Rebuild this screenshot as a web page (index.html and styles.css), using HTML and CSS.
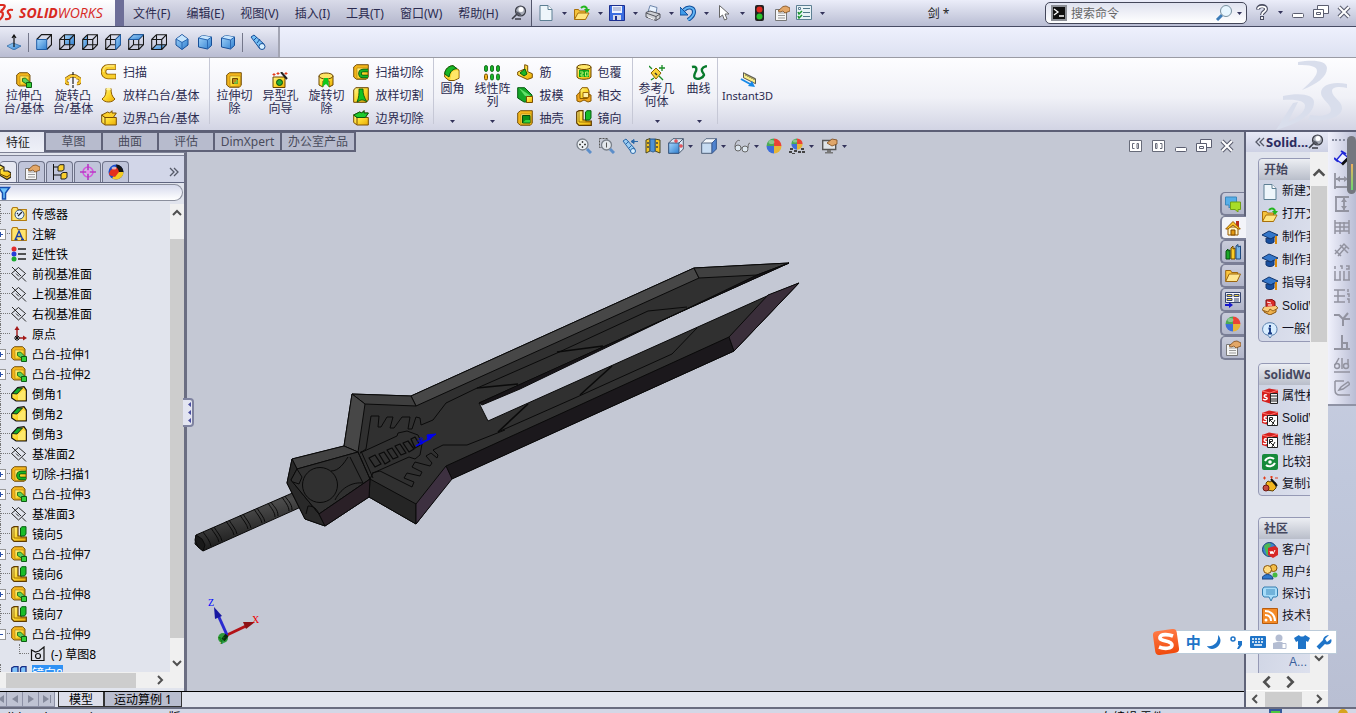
FILE: index.html
```
<!DOCTYPE html>
<html lang="zh-CN">
<head>
<meta charset="utf-8">
<title>SolidWorks - 剑</title>
<link rel="stylesheet" href="styles.css">
</head>
<body>
<svg class="defs" aria-hidden="true">
<defs>
<linearGradient id="gy" x1="0" y1="0" x2="1" y2="1"><stop offset="0" stop-color="#fff58e"/><stop offset=".5" stop-color="#fdd92c"/><stop offset="1" stop-color="#e8a908"/></linearGradient>
<linearGradient id="gb" x1="0" y1="0" x2="1" y2="1"><stop offset="0" stop-color="#a6d6fb"/><stop offset="1" stop-color="#2f7fd0"/></linearGradient>
<linearGradient id="grip" x1="0" y1="0" x2="0.35" y2="1"><stop offset="0" stop-color="#1c1c1c"/><stop offset=".4" stop-color="#4b4b4b"/><stop offset="1" stop-color="#151515"/></linearGradient>
<linearGradient id="so" x1="0" y1="0" x2="0" y2="1"><stop offset="0" stop-color="#ff7a45"/><stop offset="1" stop-color="#f04a0c"/></linearGradient>
<symbol id="caret" viewBox="0 0 7 4"><path d="M0 0h7L3.500 4z" fill="#33335a"/></symbol>
<symbol id="new" viewBox="0 0 16 16"><path d="M2 .5h8l4 4v11H2z" fill="#eef6fb" stroke="#5d7f93"/><path d="M10 .5v4h4" fill="#fff" stroke="#5d7f93"/></symbol>
<symbol id="open" viewBox="0 0 16 16"><path d="M.5 14V4.500h4l1 1.500h6v8z" fill="#f5c33c" stroke="#a9700a"/><path d="M.5 14.500 4 8h11l-3.500 6.500z" fill="#ffe680" stroke="#a9700a"/><path d="M7 3c3-3 6-1 6 2" fill="none" stroke="#23b61e" stroke-width="2"/><path d="M10 4h6l-3 4z" fill="#23b61e"/></symbol>
<symbol id="save" viewBox="0 0 16 16"><path d="M.5.5h15v15h-15z" fill="#3b6de0" stroke="#1c2f8f"/><path d="M3 1h10v7H3z" fill="#eef3ff"/><path d="M4 3h8M4 5h8" stroke="#8a96c0"/><path d="M4 10h8v5H4z" fill="#d5daea"/><path d="M6 11h2v4H6z" fill="#1c2f8f"/></symbol>
<symbol id="print" viewBox="0 0 16 16"><path d="M3 7 5 .5l7 2L11 8z" fill="#e9f3ff" stroke="#6d86ab"/><path d="M1 7.500 5 6l10 3v4l-4 2.500L1 12z" fill="#cfd1d6" stroke="#54565e"/><path d="m1 8 10 3.500L15 9M11 11.500v4" fill="none" stroke="#54565e"/><path d="m3 12 6 2.500" stroke="#fff"/></symbol>
<symbol id="undo" viewBox="0 0 16 16"><path d="M4 5c4-4 10-3 10 2 0 4-3 6-6 8" fill="none" stroke="#114f9c" stroke-width="4"/><path d="M0 2v8h8z" fill="#3f9bea" stroke="#114f9c"/><path d="M4 5c4-4 10-3 10 2 0 4-3 6-6 8" fill="none" stroke="#63b5f5" stroke-width="2"/></symbol>
<symbol id="cursor" viewBox="0 0 16 16"><path d="M3.500.5v12l3-2.500 2 5 2.500-1-2-5h4z" fill="#fff" stroke="#666"/></symbol>
<symbol id="traffic" viewBox="0 0 16 16"><rect x="4" y="0" width="9" height="16" rx="2" fill="#222"/><circle cx="8.500" cy="4.500" r="3" fill="#e02a20"/><circle cx="8.500" cy="11.500" r="3" fill="#27c32a"/></symbol>
<symbol id="props" viewBox="0 0 16 16"><path d="M1.500 4.500h11v11h-11z" fill="#f6f6f6" stroke="#777"/><path d="M4 8h7M4 10.500h7M4 13h7" stroke="#999"/><path d="m4 6 5-4.500 3-.5 4 2v3l-5 2-2-2-3 1z" fill="#e3a768" stroke="#7c4b1c" stroke-width=".8"/></symbol>
<symbol id="optlist" viewBox="0 0 16 16"><path d="M.5.5h15v14H.5z" fill="#e8f2f6" stroke="#5d7f93"/><path d="M7 3.500h7M7 7.500h7M7 11.500h7" stroke="#4f7788"/><path d="M2.500 2.500h2v2h-2z" fill="#fff" stroke="#5d7f93"/><path d="m2 7 1 2 3-3M2 11l1 2 3-3" fill="none" stroke="#1b9430" stroke-width="1.500"/></symbol>
<symbol id="pin" viewBox="0 0 16 16"><path d="m6 9-5 5M4 14h6" stroke="#3b3d46" stroke-width="1.600"/><circle cx="9.500" cy="6" r="5" fill="#a9adb8" stroke="#3b3d46" stroke-width="1.200"/><path d="M5 6c0 3 3 5 6 4.500L9 8z" fill="#555864"/><circle cx="10" cy="4.500" r="2.500" fill="#fff"/></symbol>
<symbol id="help" viewBox="0 0 16 16"><path d="M4 5.500C4 1 12 1 12 5c0 3-4 2.500-4 6" fill="none" stroke="#4a4d60" stroke-width="4"/><path d="M6 12h4v4H6z" fill="#4a4d60"/><path d="M4 5c0-3 8-3.500 8 0 0 3-4 2.500-4 6M8 13v2" fill="none" stroke="#fff" stroke-width="1.800"/></symbol>
<symbol id="min" viewBox="0 0 16 16"><rect x="2.500" y="9.500" width="11" height="4" rx="1" fill="#fff" stroke="#5b5e70"/></symbol>
<symbol id="restore" viewBox="0 0 16 16"><path d="M4.500 1.500h11v8h-11z" fill="#fff" stroke="#5b5e70"/><path d="M.5 5.500h10v8H.5z" fill="#fff" stroke="#5b5e70"/><path d="M3.500 8.500h4v2h-4z" fill="none" stroke="#5b5e70"/></symbol>
<symbol id="x" viewBox="0 0 16 16"><path d="m3 3 10 10M13 3 3 13" stroke="#5b5e70" stroke-width="4.200"/><path d="m3 3 10 10M13 3 3 13" stroke="#fff" stroke-width="2"/></symbol>
<symbol id="cmd" viewBox="0 0 16 16"><path d="M0 0h16v16H0z" fill="#8d9097"/><path d="M2 2h12v12H2z" fill="#111"/><path d="m3 4 4 3-4 3M8 11h5" stroke="#fff" stroke-width="1.300" fill="none"/></symbol>
<symbol id="mag" viewBox="0 0 18 18"><path d="m2 16 5-5" stroke="#3c7cb8" stroke-width="3"/><circle cx="11" cy="7" r="5.500" fill="#e7f6ff" stroke="#78909f"/></symbol>
<symbol id="normal" viewBox="0 0 16 16"><path d="m1 12 6-3 8 3-7 4z" fill="url(#gb)" stroke="#22619f" stroke-width=".7"/><path d="M8 13V2M6 4l2-3 2 3" stroke="#111" stroke-width="1.200" fill="none"/></symbol>
<symbol id="wire" viewBox="0 0 16 16"><path d="M.7 5.500h10v10H.7zM5.500.7h10v10h-10zM.7 5.500 5.500.7M10.700 5.500l4.800-4.800M10.700 15.500l4.800-4.800M.7 15.500l4.800-4.800" fill="none" stroke="#171717" stroke-width="1.100"/></symbol>
<symbol id="front" viewBox="0 0 16 16"><path d="M.7 5.500 5.500.7h10v10l-4.800 4.800M10.700 5.500l4.800-4.800" fill="none" stroke="#171717" stroke-width="1.200"/><path d="M.7 5.500h10v10H.7z" fill="url(#gb)" stroke="#1d5ca5"/></symbol>
<symbol id="back" viewBox="0 0 16 16"><path d="M5.500.7h10v10h-10z" fill="url(#gb)"/><use href="#wire"/></symbol>
<symbol id="left" viewBox="0 0 16 16"><path d="M.7 5.500 5.500.7v10l-4.800 4.800z" fill="url(#gb)"/><use href="#wire"/></symbol>
<symbol id="right" viewBox="0 0 16 16"><use href="#wire"/><path d="m10.700 5.500 4.800-4.800v10l-4.800 4.800z" fill="url(#gb)" stroke="#1d5ca5"/></symbol>
<symbol id="top" viewBox="0 0 16 16"><use href="#wire"/><path d="M.7 5.500 5.500.7h10l-4.800 4.800z" fill="url(#gb)" stroke="#1d5ca5"/></symbol>
<symbol id="bottom" viewBox="0 0 16 16"><path d="m.7 15.500 4.800-4.800h10l-4.800 4.800z" fill="url(#gb)"/><use href="#wire"/></symbol>
<symbol id="iso" viewBox="0 0 16 16"><path d="m8 .5 6 4.500v6l-6 4.500L2 11V5z" fill="url(#gb)" stroke="#174f98"/><path d="m8 1 5.500 4L8 8 2.500 5z" fill="#c7e5fd"/><path d="m2 5 6 3.500L14 5M8 8.500v7" fill="none" stroke="#2c68b3"/></symbol>
<symbol id="dim" viewBox="0 0 16 16"><path d="m1.500 4 4-2.500 9 1.500v8.500l-4 3.500-9-2z" fill="url(#gb)" stroke="#174f98"/><path d="m2 4 8.500 1.500 4-2.500-9-1.500z" fill="#c7e5fd"/><path d="m1.500 4 9 2 4-3M10.500 6v9" fill="none" stroke="#2c68b3"/></symbol>
<symbol id="spy" viewBox="0 0 16 16"><path d="m1 3 3-2 10 9-4 5z" fill="#74bff5" stroke="#174f98"/><circle cx="12" cy="12.500" r="3" fill="#d5efff" stroke="#174f98"/><path d="m4 6 3-3M7 9l3-4" stroke="#174f98"/></symbol>
<symbol id="extr" viewBox="0 0 16 16"><path d="M.7 3 3.500.7h8L14 3v9l-2 2H3L.7 12z" fill="#f2b51a" stroke="#6a4500" stroke-width=".9"/><path d="M4 4h9v9H4z" fill="url(#gy)" stroke="#a87a10" stroke-width=".6"/><path d="m6.500 6.500 3-.5 4 4-3 2-4-2.500z" fill="#5ad35b" stroke="#0c5c12" stroke-width=".8"/><path d="M10.500 10.500h5v5h-5z" fill="#35cf38" stroke="#0c5c12"/></symbol>
<symbol id="revolve" viewBox="0 0 16 16"><path d="M5 6c-5-2-6 6-1 5.500M11 6c5-2 6 6 1 5.500M3 6c2-3 8-3 10 0" fill="none" stroke="#8a5a00" stroke-width="3.400"/><path d="M5 6c-5-2-6 6-1 5.500M11 6c5-2 6 6 1 5.500M3 6c2-3 8-3 10 0" fill="none" stroke="#f9cb34" stroke-width="2"/><path d="M8 0v3M8 5v7M8 13v3" stroke="#222" stroke-width="1.200"/></symbol>
<symbol id="sweep" viewBox="0 0 16 16"><path d="M15 3H7C1 3 1 12.500 7 12.500h8" fill="none" stroke="#8a5a00" stroke-width="5.500"/><path d="M14.500 3H7C1 3 1 12.500 7 12.500h7.500" fill="none" stroke="#f9cf2e" stroke-width="3.800"/><path d="M13 2H7C3 2 2 6 3 8" fill="none" stroke="#fff5a0"/></symbol>
<symbol id="loft" viewBox="0 0 16 16"><path d="M5 1.500h5c0 5 1 8 4 10.500-3 4-10 4-13 0 4-3 4-6 4-10.500z" fill="url(#gy)" stroke="#8b5a00"/><ellipse cx="7.500" cy="2" rx="2.500" ry="1.200" fill="#fff3a0"/></symbol>
<symbol id="boundary" viewBox="0 0 16 16"><path d="M.7 5 4 7.500h11.300v7.500H4L.7 12.500z" fill="url(#gy)" stroke="#7a4e00"/><path d="m.7 5 6-3 2 1 2.300-2.300V3h4.300l-3 4.500H4z" fill="#fbd02d" stroke="#7a4e00"/><path d="M4 7.500v7" stroke="#7a4e00"/></symbol>
<symbol id="bcut" viewBox="0 0 16 16"><use href="#boundary"/><path d="m.7 5 6-3 2 1 2.300-2.300V3h4.300l-3 4.500H4z" fill="#1fc92c" stroke="#075c10"/></symbol>
<symbol id="box" viewBox="0 0 16 16"><path d="m.7 3 2.800-2.300h11.800v12.300l-2 2.300H3.500L.7 13z" fill="#f2b51a" stroke="#6a4500" stroke-width=".9"/><path d="M4 4h10.500v10.500H4z" fill="url(#gy)" stroke="#a87a10" stroke-width=".6"/></symbol>
<symbol id="ecut" viewBox="0 0 16 16"><use href="#box"/><path d="M6.500 6.500h5v5h-5z" fill="#c08a1c" stroke="#6c4600"/><path d="M8 11h3V8" stroke="#6ed04e" stroke-width="1.500" fill="none"/></symbol>
<symbol id="hole" viewBox="0 0 16 16"><path d="M1 5h12v10.500H1z" fill="url(#gy)" stroke="#6c4600"/><circle cx="7.500" cy="10.500" r="3" fill="#25aa32" stroke="#064d0d"/><path d="m9 0 6 7" stroke="#222" stroke-width="2"/><path d="M2 1v3M.5 2.500h3M6 0v3M4.500 1.500h3M14 0v3M12.500 1.500h3" stroke="#e23b18"/></symbol>
<symbol id="rcut" viewBox="0 0 16 16"><path d="M1 4v9l4 2V9h6v6l4-2V4z" fill="url(#gy)" stroke="#6c4600"/><ellipse cx="8" cy="4" rx="7" ry="3" fill="#ffe465" stroke="#6c4600"/><path d="M6 6h4l1 9-3-3-4 3z" fill="#0fc81d"/></symbol>
<symbol id="scut" viewBox="0 0 16 16"><use href="#box"/><path d="M15 6.500h-5c-4 0-4 6 0 6h5" fill="none" stroke="#064d0d" stroke-width="3.600"/><path d="M15 6.500h-5c-4 0-4 6 0 6h5" fill="none" stroke="#18b424" stroke-width="2"/></symbol>
<symbol id="lcut" viewBox="0 0 16 16"><path d="m.7 3 2-2.300h12.600V13l-2 2.300H.7z" fill="url(#gy)" stroke="#6c4600"/><path d="M6 2h4c0 5 1 8 4 13-3-2-4-2-6-2l-4 2c2-5 2-8 2-13z" fill="#12c322" stroke="#064d0d" stroke-width=".8"/></symbol>
<symbol id="fillet" viewBox="0 0 16 16"><path d="M.7 9C1 4 5 .7 9 .7l6 4.500v8l-5 2.300H5L.7 12z" fill="url(#gy)" stroke="#7a5200"/><path d="M.7 9C1 4 5 .7 9 .7l4 3C9 4 6 6 5 12z" fill="#17b626" stroke="#075c10"/><path d="M8 7c4-2 6-2 6.500-1v7l-4.500 2H6z" fill="#ffe768"/></symbol>
<symbol id="chamfer" viewBox="0 0 16 16"><path d="m.7 8 6-6.500L13 .7 15.300 4v11H5L.7 12z" fill="url(#gy)" stroke="#111" stroke-width="1.200"/><path d="m1.500 7.500 5-5.500h5l-5.500 6z" fill="#16ac2b" stroke="#111" stroke-width=".8"/><path d="m7 9 5-5 2.500 1v9H7z" fill="#ffe96a"/></symbol>
<symbol id="pattern" viewBox="0 0 16 16"><g fill="#16b525" stroke="#075c10" stroke-width=".8"><rect x=".5" y=".5" width="3" height="6" rx="1.500"/><rect x="6.500" y=".5" width="3" height="6" rx="1.500"/><rect x="12.500" y=".5" width="3" height="6" rx="1.500"/><rect x="6.500" y="9" width="3" height="6" rx="1.500"/><rect x="12.500" y="9" width="3" height="6" rx="1.500"/></g><rect x=".5" y="9" width="3" height="6" rx="1.500" fill="#f4b21d" stroke="#7a5200"/></symbol>
<symbol id="rib" viewBox="0 0 16 16"><path d="m.7 8 7-3V.7l3 1v6l4.600 2v4l-5 1.800L.7 11z" fill="url(#gy)" stroke="#7a4e00"/><path d="m3 9 5-4 2 5-3 2z" fill="#1ab727" stroke="#075c10"/></symbol>
<symbol id="draft" viewBox="0 0 16 16"><path d="M.7.7h7L15 8v7H7L.7 11z" fill="#16a728" stroke="#075c10"/><path d="m2 1 12 8H8z" fill="#63e16a"/><path d="M9.500 9.500h6v6h-6z" fill="url(#gy)" stroke="#7a4e00"/></symbol>
<symbol id="shell" viewBox="0 0 16 16"><use href="#box"/><path d="M5.500 5.500h7.500v7.500H5.500z" fill="#0a8f1a" stroke="#064d0d"/><path d="m6 12.500 2.500-2.500h4.500v2.500z" fill="#33d340"/></symbol>
<symbol id="wrap" viewBox="0 0 16 16"><path d="M1 3v10c1 3 13 3 14 0V3z" fill="url(#gy)" stroke="#6c4600"/><ellipse cx="8" cy="3" rx="7" ry="2.500" fill="#ffe768" stroke="#6c4600"/><path d="M3 6h10v7H3z" fill="#0ca51a"/><path d="M4 8h3v2H5v2h3M9.500 12V8H12v4z" stroke="#b9f26b" fill="none"/></symbol>
<symbol id="intersect" viewBox="0 0 16 16"><path d="M.7 8 4 5l11 3v6l-3 1-4-2-4 2-3-1z" fill="#f0a51e" stroke="#8a5a00"/><path d="M4 3.500 6 .7h5.500L13 4v6l-2 1.500H4z" fill="url(#gy)" stroke="#8a5a00"/><path d="M7 5.500h5.500v5H7z" fill="#fff0a8" stroke="#a06c08"/></symbol>
<symbol id="mirror" viewBox="0 0 16 16"><path d="M.7 2 3 .7h4V10h3v1h5.300v4.300H3L.7 13z" fill="url(#gy)" stroke="#5f3b00" stroke-width="1.200"/><path d="M9.500 2 11 .7h4V8l-1.500 2h-4z" fill="#18bd28" stroke="#075c10"/><path d="M3 1v11h12" stroke="#8a5a00" fill="none" stroke-width=".8"/></symbol>
<symbol id="refgeo" viewBox="0 0 16 16"><path d="m7 3 5 5-5 6-5-6z" fill="#fbd339" stroke="#8b6200"/><path d="M0 1l3 3M14 15l-4-4M13 0v6M10 3h6M2 15l3-2" stroke="#178b25" stroke-width="1.300"/><path d="m6 8 2 2" stroke="#333" stroke-width="1.500"/></symbol>
<symbol id="curve" viewBox="0 0 16 16"><path d="M1 2c4-1 5 1 4 4-1 2-3 5-1 7 3 2 8 0 9-3 0-2-3-3-2-6 1-2 2-2 5-3" fill="none" stroke="#087a2c" stroke-width="2.400"/></symbol>
<symbol id="instant" viewBox="0 0 16 16"><path d="m3.500.7 12 6v5l-12-6z" fill="#f8ed87" stroke="#333" stroke-width=".8"/><path d="M6 2v2m2-1v2m2-1v2m2-1v2m2-1v2" stroke="#333" stroke-width=".8"/><path d="m1 7 9 5" stroke="#1689e8" stroke-width="2"/><path d="m12 9 3 6-7-1z" fill="#1689e8"/></symbol>
<symbol id="zoomfit" viewBox="0 0 16 16"><circle cx="6.500" cy="6.500" r="5.500" fill="#edf1f4" stroke="#7a818b" stroke-width="1.300"/><path d="m11 11 4 4" stroke="#5c8ec9" stroke-width="3"/><path d="M6.500 3v2M6.500 8v2M3 6.500h2M8 6.500h2" stroke="#444" stroke-width="1.400"/></symbol>
<symbol id="zoomarea" viewBox="0 0 16 16"><path d="M.5.5h8v9h-8z" fill="none" stroke="#555" stroke-dasharray="2 1"/><circle cx="7.500" cy="7" r="5" fill="#e2e7ec" stroke="#7a818b" stroke-width="1.300"/><path d="m11 11 4 4" stroke="#5c8ec9" stroke-width="3"/><path d="M7.500 4.500v5" stroke="#555"/></symbol>
<symbol id="prev" viewBox="0 0 16 16"><path d="m1 3 3-2 9 10-3 4z" fill="#9acdf4" stroke="#2b68a8"/><circle cx="11" cy="13" r="2.500" fill="#d7efff" stroke="#2b68a8"/><path d="M10 3.500h6M12 1.500 9 3.500l3 2z" fill="#2b68a8" stroke="#2b68a8"/><path d="m4 6 3-3M7 10l3-3" stroke="#2b68a8"/></symbol>
<symbol id="section" viewBox="0 0 16 16"><path d="m1 2 4-1.500V13L1 15zM10 1l5 1v13l-5-2z" fill="#f6c421" stroke="#474724"/><path d="M5 1h5v12c-2 2-4 0-5 0z" fill="#4e91d5" stroke="#29598c"/><path d="M3 4v2m0 2v2m9-6v2m0 2v2" stroke="#444" stroke-width="1.500"/></symbol>
<symbol id="orient" viewBox="0 0 16 16"><path d="M.7 5 5 .7h10.300V11L11 15.300H.7z" fill="#dce9f6" stroke="#4b5a70"/><path d="M.7 5H11v10.300H.7z" fill="url(#gb)" stroke="#3b5982"/><path d="m11 5 4.300-4.300" stroke="#4b5a70"/><path d="M8 1v4M6 3h4m3 3v4m-2-2h4" stroke="#e3262c"/></symbol>
<symbol id="style" viewBox="0 0 16 16"><path d="M.7 5 5 .7h10.300V11L11 15.300H.7z" fill="#f3f7fb" stroke="#5b6b83"/><path d="M.7 5H11v10.300H.7z" fill="#c7dcf2" stroke="#5b6b83"/><path d="m11 5 4.300-4.300V11L11 15.300z" fill="#4f83cf" stroke="#3d5f98"/></symbol>
<symbol id="glasses" viewBox="0 0 16 16"><circle cx="4" cy="10" r="3" fill="#dce6ee" stroke="#666"/><circle cx="11" cy="11" r="3" fill="#dce6ee" stroke="#666"/><path d="M1 9c0-5 3-8 5-6M14 10c0-5 2-6 2-4M7 10h1" fill="none" stroke="#666"/></symbol>
<symbol id="ball" viewBox="0 0 16 16"><path d="M8 8V.5A7.500 7.500 0 0 0 .5 8z" fill="#4aaa55"/><path d="M8 8h7.500A7.500 7.500 0 0 0 8 .5z" fill="#ea4335"/><path d="M8 8v7.500A7.500 7.500 0 0 0 15.500 8z" fill="#e7b536"/><path d="M8 8H.5A7.500 7.500 0 0 0 8 15.500z" fill="#3d6fd9"/><ellipse cx="5.500" cy="4" rx="3" ry="2" fill="#fff" opacity=".35"/></symbol>
<symbol id="appear" viewBox="0 0 16 16"><circle cx="8" cy="8" r="7.500" fill="#1749c9"/><path d="M8 .5A7.500 7.500 0 0 1 15.500 8L10 9z" fill="#151515"/><path d="M15.500 8A7.500 7.500 0 0 1 4 14.300L9 8z" fill="#f4cb22"/><path d="M4 5c3-3 6-2 7 3l-4 5-6-2c0-3 1-4 3-6z" fill="#e4301d"/><ellipse cx="6" cy="4" rx="2.500" ry="1.500" fill="#fff" opacity=".6"/></symbol>
<symbol id="scene" viewBox="0 0 16 16"><path d="M1 10h3v2H1zM12 10h3v2h-3zM0 13h3v2H0zM5 12h3v2H5zM9 13h3v2H9zM13 13h3v2h-3zM3 15h3v1H3z" fill="#444"/><svg x="2" y="0" width="12" height="12"><use href="#ball"/></svg></symbol>
<symbol id="viewset" viewBox="0 0 16 16"><path d="M.7 2.500h13v9H.7z" fill="#dfe4e8" stroke="#555" stroke-width="1.400"/><path d="M5 12h4v2h2v1.500H3V14h2z" fill="#777"/><path d="m5 5 5-4 5 1v4l-5 2z" fill="#dfa66a" stroke="#7c4b1c" stroke-width=".8"/></symbol>
<symbol id="paneL" viewBox="0 0 16 16"><path d="M2.500 2.500h12v11h-12z" fill="#fff" stroke="#676b79"/><path d="M7.500 5.500h-2v5h2M10 5.500h1.500v5H10z" fill="none" stroke="#676b79"/></symbol>
<symbol id="paneR" viewBox="0 0 16 16"><path d="M2.500 2.500h12v11h-12z" fill="#fff" stroke="#676b79"/><path d="M10 5.500h2v5h-2M5.500 5.500H7v5H5.500z" fill="none" stroke="#676b79"/></symbol>
<symbol id="part" viewBox="0 0 16 16"><path d="m1 4 4-3 4 2v4l4 0 3 2v4l-4 2.500L1 9z" fill="url(#gy)" stroke="#222" stroke-width="1.200"/><path d="m1 4 4 2v4m0-4 4-3m-4 7 7 3 4-3" fill="none" stroke="#5b3c00"/></symbol>
<symbol id="config" viewBox="0 0 16 16"><path d="M1.500 0v16M2 3h4M2 11h7" stroke="#111"/><path d="M6 2.500 8 .7h4v5L10 7H6zM9 10l2-1.500h4v5L13 15H9z" fill="#f9ce2d" stroke="#222"/></symbol>
<symbol id="target" viewBox="0 0 16 16"><circle cx="8" cy="8" r="5" fill="none" stroke="#d554df" stroke-width="1.500"/><path d="M8 0v16M0 8h16" stroke="#b638c3" stroke-width="1.600"/><circle cx="8" cy="8" r="2" fill="#e894ee"/></symbol>
<symbol id="funnel" viewBox="0 0 16 16"><path d="M2.500 2.500h11L9.500 8v6h-3V8z" fill="#6ec3fb" stroke="#164eaf" stroke-width="1.500"/></symbol>
<symbol id="folder" viewBox="0 0 16 16"><path d="M.7 14.500V3.500L2 1.500h4l1 2h8.300v11z" fill="#ffe36c" stroke="#b27c12" stroke-width="1.200"/></symbol>
<symbol id="sensor" viewBox="0 0 16 16"><use href="#folder"/><circle cx="8.500" cy="8.500" r="4.500" fill="#e5f3ff" stroke="#334e73"/><path d="m7 10 4-4M6 7l1 1" stroke="#222" stroke-width="1.200"/></symbol>
<symbol id="annot" viewBox="0 0 16 16"><use href="#folder"/><path d="m4.500 13 3.500-8 3.500 8M6 10.500h4M3.500 13.500h3M10 13.500h3" fill="none" stroke="#1c3fa5" stroke-width="1.400"/></symbol>
<symbol id="material" viewBox="0 0 16 16"><circle cx="3" cy="3" r="2.500" fill="#e12d2d"/><circle cx="3" cy="8" r="2.500" fill="#273edb"/><circle cx="3" cy="13" r="2.500" fill="#1daa31"/><path d="M7 3h8M7 8h8M7 13h8" stroke="#222" stroke-width="1.400"/></symbol>
<symbol id="plane" viewBox="0 0 16 16"><path d="m7.500 1.500 7 6-7 6.500-7-6.500zM1 1l9 9M11 11.500l4 4M5 7.500l3 3" fill="none" stroke="#111" stroke-width=".9"/></symbol>
<symbol id="origin" viewBox="0 0 16 16"><path d="M6 12V3M8 12h5" stroke="#a31818" stroke-width="1.400"/><path d="m3.500 4 2.500-4 2.500 4zM12 9.500l4 2.500-4 2.500z" fill="#a31818"/><path d="m4 10 4 4M8 10l-4 4M6 9v6M3 12h6" stroke="#111"/></symbol>
<symbol id="sketch" viewBox="0 0 16 16"><path d="M1.500 14.500V4l4 2L9 5l5-4v13.500z" fill="none" stroke="#111" stroke-width="1.200"/><circle cx="8" cy="10" r="2.500" fill="none" stroke="#111" stroke-width="1.200"/></symbol>
<symbol id="mirrorsel" viewBox="0 0 16 16"><path d="M.7 2 3 .7h4V10h3v5.300H.7zM9.500 2 11 .7h4V10H9.500z" fill="#7fc3fb" stroke="#172e87" stroke-width="1.300"/></symbol>
<symbol id="chat" viewBox="0 0 16 16"><path d="M.5 1h11v8H7l-3 3V9H.5z" fill="#57aee8" stroke="#3b87bc"/><path d="M5.500 6h10v7.500H13V16l-3-2.500H5.500z" fill="#a8dc28" stroke="#70a015"/></symbol>
<symbol id="home" viewBox="0 0 16 16"><path d="M3 7h10v8H3z" fill="#fff5c8" stroke="#965900"/><path d="M11 1h3v6h-3z" fill="#b82d20"/><path d="M.7 9 8 1.500 15.300 9 13 9 8 5 3 9z" fill="#ffc72d" stroke="#965900"/><path d="M6 10h4v5H6z" fill="#e49a12" stroke="#814a00"/></symbol>
<symbol id="books" viewBox="0 0 16 16"><path d="m1 7 2-2v2l2-1v9H1z" fill="#1ca728" stroke="#064c0e"/><path d="M6 4 8 2v3l2-1v11H6z" fill="#f9cc27" stroke="#6c4600"/><path d="m11 2 2-1.500V3l2.500-1v13H11z" fill="#77b3e5" stroke="#1d497e"/></symbol>
<symbol id="fold2" viewBox="0 0 16 16"><path d="M.7 13.500v-11h5l1 2h6V7" fill="#fbc53c" stroke="#9b6610"/><path d="m.7 13.500 3.500-7.500h11.300L12 13.500z" fill="#ffe792" stroke="#9b6610"/></symbol>
<symbol id="palette" viewBox="0 0 16 16"><path d="M.5.500h15v10H.5z" fill="#f8f8fa" stroke="#36456e"/><path d="M2 2.500h5v2H2zm0 4h5v2H2zm7-4h5v2H9z" fill="#f2d241" stroke="#36456e"/><path d="M9 7h5M9 9h5" stroke="#36456e"/><path d="M0 13h5" stroke="#1616ce" stroke-width="2"/><path d="m4 10 4 3-4 3z" fill="#1616ce"/></symbol>
<symbol id="cap" viewBox="0 0 16 16"><path d="m0 5 7-4 9 4-7 4z" fill="#3477ca" stroke="#12366f"/><path d="M4 8v4c2 2 6 2 8 0V7L9 9z" fill="#174e9f" stroke="#12366f"/><path d="M14 6v8" stroke="#db8a0a" stroke-width="2"/></symbol>
<symbol id="crate" viewBox="0 0 16 16"><path d="m4 1 6-.5 3 2v6L8 10 4 8z" fill="#d92d2a" stroke="#7b1010"/><path d="m2 8 6 2 6-3v6l-6 3-6-3z" fill="#eeb14d" stroke="#87510b"/><path d="m2 8-2 3 6 2 2-3 3 2 5-3-2-2" fill="#f8cd7d" stroke="#87510b" stroke-width=".8"/><path d="m5 3 4 1M6 6h4" stroke="#fff"/></symbol>
<symbol id="info" viewBox="0 0 16 16"><path d="M8 .7c9 0 9 12 2 12.500L8 16l-2-2.800C-2 12-1 .7 8 .7z" fill="#d8edff" stroke="#587fac"/><path d="M8 3v2M6.500 6.500H8v5M6 11.500h4" fill="none" stroke="#173b85" stroke-width="1.900"/></symbol>
<symbol id="swcube" viewBox="0 0 16 16"><path d="m0 3 7-2.500L16 2v11l-8 2.500L0 13z" fill="#d5201d"/><path d="M0 3 8 5l8-3" stroke="#ff7771" fill="none"/><path d="M5 7c-3-1-4 2-1 2.500S4 13 1 11" fill="none" stroke="#fff" stroke-width="1.300"/></symbol>
<symbol id="swprop" viewBox="0 0 16 16"><use href="#swcube"/><path d="M8.500 5.500h7v10h-7z" fill="#eee" stroke="#222"/><path d="M9 8h6M9 11h6M9 13h6" stroke="#222"/></symbol>
<symbol id="swrx" viewBox="0 0 16 16"><use href="#swcube"/><path d="M5.500 5.500h10v10h-10z" fill="#fff" stroke="#222"/><path d="M7.500 12V7.500h3v2h-3l5 5M13 10l-3 5" fill="none" stroke="#222"/></symbol>
<symbol id="compare" viewBox="0 0 16 16"><rect width="16" height="16" rx="2" fill="#168a3b"/><path d="M3 7c2-4 7-4 9-2M13 9c-2 4-7 4-9 2" fill="none" stroke="#fff" stroke-width="2"/><circle cx="8" cy="8" r="1.800" fill="#fff"/></symbol>
<symbol id="wizard" viewBox="0 0 16 16"><path d="m4 7 2-2 2 1 2-1 4 2v5l-3 3-6-1z" fill="#f3b61f" stroke="#604000"/><circle cx="4" cy="12" r="3" fill="#c44b42" stroke="#6e1812"/><path d="m9 3 6 7" stroke="#111" stroke-width="2"/><path d="M1 2h3M2.500.5v3M8 1h3M9.500 0v3M13 2h3" stroke="#e13f1d"/></symbol>
<symbol id="portal" viewBox="0 0 16 16"><circle cx="7.500" cy="7.500" r="7" fill="#3c83cc" stroke="#163f75"/><path d="M2 4c3-4 7-3 7-1L6 7l2 5-3 2z" fill="#4eb851"/><path d="m6 6 7-2 3 2v7l-5 3-5-3z" fill="#d82826"/><path d="m8 9 1 3 1-3 1 3 2-4" fill="none" stroke="#fff"/></symbol>
<symbol id="users" viewBox="0 0 16 16"><circle cx="11.500" cy="4" r="3.500" fill="#f4bd47" stroke="#855109"/><circle cx="5.500" cy="5.500" r="4" fill="#ffdc83" stroke="#855109"/><path d="M0 15c0-6 11-6 11 0z" fill="#2f79cd" stroke="#174180"/><circle cx="13" cy="11" r="2.500" fill="#45b941"/></symbol>
<symbol id="forum" viewBox="0 0 16 16"><path d="M2 1h12l1.500 2v7L14 11h-3l-2 4-2-4H2L.5 9V3z" fill="#a6dbf8" stroke="#347caf"/><path d="M4 4h9M4 6h9M4 8h9" stroke="#3c89bc"/></symbol>
<symbol id="rss" viewBox="0 0 16 16"><path d="M.5.5h15v15H.5z" fill="#f48b28" stroke="#b85b0c"/><circle cx="4" cy="12" r="1.500" fill="#fff"/><path d="M3 7c4 0 6 2 6 6M3 3c6 0 10 4 10 10" fill="none" stroke="#fff" stroke-width="2"/></symbol>
<symbol id="smartdim" viewBox="0 0 16 16"><path d="m2.500 10 6-7 5.500 4.500-6 6z" fill="#edf0ff" stroke="#1f27d7" stroke-width="1.300"/><path d="m8 14.500 6.500-6.500" stroke="#111" stroke-width="2.600"/><path d="m0 8 4 3.500M7 1l5 3" stroke="#1f27d7" stroke-width="2"/></symbol>
<symbol id="d1" viewBox="0 0 16 16"><path d="M1 0v16M15 0v16M2 6h12M0 14h16" stroke="#9293a0" stroke-width="1.800"/><path d="m6 3-4 3 4 3zM10 3l4 3-4 3z" fill="#9293a0"/></symbol>
<symbol id="d2" viewBox="0 0 16 16"><path d="M1 1h14M1 15h14M10 2v12M2 1v14" stroke="#9293a0" stroke-width="1.800"/><path d="m7 6 3-4 3 4zM7 10l3 4 3-4z" fill="#9293a0"/></symbol>
<symbol id="d3" viewBox="0 0 16 16"><path d="M1 1v14M6 3v12M10 3v9M15 1v14M1 4h14M1 8h14M1 12h14" stroke="#9293a0" stroke-width="1.500"/></symbol>
<symbol id="d4" viewBox="0 0 16 16"><path d="M1 12 10 2l5 5M4 14l8-9M1 8l6 6M6 3l8 8" fill="none" stroke="#9293a0" stroke-width="1.500"/></symbol>
<symbol id="d5" viewBox="0 0 16 16"><path d="M1 6v9M6 6v9M10 6v9M15 6v9M0 15h7M9 15h7M1 1v3M6 1h2v3M12 1h3v3h-3" fill="none" stroke="#9293a0" stroke-width="1.500"/></symbol>
<symbol id="d6" viewBox="0 0 16 16"><path d="M0 2h11M0 8h11M0 14h11M4 2v12M14 1v3M13 6h2v3M13 11h2v4" fill="none" stroke="#9293a0" stroke-width="1.500"/></symbol>
<symbol id="d7" viewBox="0 0 16 16"><path d="M0 4h5l4 4h7M9 8v7M9 8l5-6" fill="none" stroke="#9293a0" stroke-width="2"/></symbol>
<symbol id="d8" viewBox="0 0 16 16"><path d="M8 1v13M0 15h16M8 9h5v5" fill="none" stroke="#9293a0" stroke-width="2"/></symbol>
<symbol id="d9" viewBox="0 0 16 16"><circle cx="3" cy="9" r="2.500" fill="none" stroke="#9293a0" stroke-width="1.500"/><circle cx="12" cy="9" r="2.500" fill="none" stroke="#9293a0" stroke-width="1.500"/><path d="M1 8 5 1M8 1v11M14 7V2M0 15h16" stroke="#9293a0" stroke-width="1.500"/></symbol>
<symbol id="d10" viewBox="0 0 16 16"><path d="M1 1h9M1 1v9c0 3 2 5 5 5h10M5 10l2-3 7-5 2 2-7 5z" fill="none" stroke="#9293a0" stroke-width="1.500"/></symbol>
<symbol id="chevU" viewBox="0 0 12 12"><path d="m2 8 4-4 4 4" fill="none" stroke="#505050" stroke-width="2"/></symbol>
<symbol id="chevD" viewBox="0 0 12 12"><path d="m2 4 4 4 4-4" fill="none" stroke="#505050" stroke-width="2"/></symbol>
<symbol id="chevL" viewBox="0 0 12 12"><path d="M8 2 4 6l4 4" fill="none" stroke="#505050" stroke-width="2"/></symbol>
<symbol id="chevR" viewBox="0 0 12 12"><path d="m4 2 4 4-4 4" fill="none" stroke="#505050" stroke-width="2"/></symbol>
<symbol id="dblR" viewBox="0 0 12 12"><path d="m2 2 4 4-4 4M6 2l4 4-4 4" fill="none" stroke="#555968" stroke-width="1.300"/></symbol>
<symbol id="dblL" viewBox="0 0 12 12"><path d="M6 2 2 6l4 4M10 2 6 6l4 4" fill="none" stroke="#555968" stroke-width="1.300"/></symbol>
<symbol id="triL" viewBox="0 0 12 12"><path d="M9 2v8L3 6z" fill="#858a9c"/></symbol>
<symbol id="triR" viewBox="0 0 12 12"><path d="M3 2v8l6-4z" fill="#858a9c"/></symbol>
<symbol id="triRE" viewBox="0 0 12 12"><path d="M2 2v8l6-4zM9 2h1v8H9z" fill="#858a9c"/></symbol>
<symbol id="triLE" viewBox="0 0 12 12"><path d="M10 2v8L4 6zM2 2h1v8H2z" fill="#858a9c"/></symbol>
</defs>
</svg>

<header class="titlebar">
  <div class="brand">
    <svg class="brand-mark" viewBox="0 0 17 22"><path d="M0 3h3c3 0 2 3-2 6M0 10c4-1 4 5-1 8M13 8C7 7 7 10 9 12s2 6-4 5" fill="none" stroke="#dc2b20" stroke-width="2.200"/></svg>
    <span class="brand-name"><b>SOLID</b>WORKS</span>
  </div>
  <nav class="menu">
    <button>文件(F)</button><button>编辑(E)</button><button>视图(V)</button><button>插入(I)</button><button>工具(T)</button><button>窗口(W)</button><button>帮助(H)</button>
    <button class="pin" aria-label="固定菜单"><svg class="ic"><use href="#pin"/></svg></button>
  </nav>
  <div class="quick">
    <button class="split" aria-label="新建"><svg class="ic"><use href="#new"/></svg><svg class="ca"><use href="#caret"/></svg></button>
    <button class="split" aria-label="打开"><svg class="ic"><use href="#open"/></svg><svg class="ca"><use href="#caret"/></svg></button>
    <button class="split" aria-label="保存"><svg class="ic"><use href="#save"/></svg><svg class="ca"><use href="#caret"/></svg></button>
    <button class="split" aria-label="打印"><svg class="ic"><use href="#print"/></svg><svg class="ca"><use href="#caret"/></svg></button>
    <button class="split" aria-label="撤销"><svg class="ic"><use href="#undo"/></svg><svg class="ca"><use href="#caret"/></svg></button>
    <button class="split" aria-label="选择"><svg class="ic"><use href="#cursor"/></svg><svg class="ca"><use href="#caret"/></svg></button>
    <button class="single" aria-label="重建模型"><svg class="ic"><use href="#traffic"/></svg></button>
    <button class="single" aria-label="文件属性"><svg class="ic"><use href="#props"/></svg></button>
    <button class="split" aria-label="选项"><svg class="ic"><use href="#optlist"/></svg><svg class="ca"><use href="#caret"/></svg></button>
  </div>
  <div class="doc-title">剑 *</div>
  <label class="search"><svg class="ic"><use href="#cmd"/></svg><input type="text" placeholder="搜索命令" aria-label="搜索命令"><svg class="ic18"><use href="#mag"/></svg><svg class="ca"><use href="#caret"/></svg></label>
  <div class="window-controls">
    <button class="split" aria-label="帮助"><svg class="ic"><use href="#help"/></svg><svg class="ca"><use href="#caret"/></svg></button>
    <button aria-label="最小化"><svg class="ic"><use href="#min"/></svg></button>
    <button aria-label="还原"><svg class="ic"><use href="#restore"/></svg></button>
    <button aria-label="关闭"><svg class="ic"><use href="#x"/></svg></button>
  </div>
</header>

<div class="viewbar">
  <div class="view-tools">
    <button aria-label="正视于"><svg class="ic"><use href="#normal"/></svg></button>
    <i class="bar"></i>
    <button aria-label="前视"><svg class="ic"><use href="#front"/></svg></button>
    <button aria-label="后视"><svg class="ic"><use href="#back"/></svg></button>
    <button aria-label="左视"><svg class="ic"><use href="#left"/></svg></button>
    <button aria-label="右视"><svg class="ic"><use href="#right"/></svg></button>
    <button aria-label="上视"><svg class="ic"><use href="#top"/></svg></button>
    <button aria-label="下视"><svg class="ic"><use href="#bottom"/></svg></button>
    <button aria-label="等轴测"><svg class="ic"><use href="#iso"/></svg></button>
    <button aria-label="上下二等角"><svg class="ic"><use href="#dim"/></svg></button>
    <button aria-label="左右二等角"><svg class="ic"><use href="#dim"/></svg></button>
    <i class="bar"></i>
    <button aria-label="视图方向"><svg class="ic"><use href="#spy"/></svg></button>
  </div>
</div>

<section class="ribbon">
  <div class="rgroup">
    <button class="big w48"><svg class="ic"><use href="#extr"/></svg>拉伸凸<br>台/基体</button>
    <button class="big w50"><svg class="ic"><use href="#revolve"/></svg>旋转凸<br>台/基体</button>
    <div class="stack">
      <button><svg class="ic"><use href="#sweep"/></svg>扫描</button>
      <button><svg class="ic"><use href="#loft"/></svg>放样凸台/基体</button>
      <button><svg class="ic"><use href="#boundary"/></svg>边界凸台/基体</button>
    </div>
  </div>
  <div class="rgroup">
    <button class="big w48"><svg class="ic"><use href="#ecut"/></svg>拉伸切<br>除</button>
    <button class="big w44"><svg class="ic"><use href="#hole"/></svg>异型孔<br>向导</button>
    <button class="big w48"><svg class="ic"><use href="#rcut"/></svg>旋转切<br>除</button>
    <div class="stack">
      <button><svg class="ic"><use href="#scut"/></svg>扫描切除</button>
      <button><svg class="ic"><use href="#lcut"/></svg>放样切割</button>
      <button><svg class="ic"><use href="#bcut"/></svg>边界切除</button>
    </div>
  </div>
  <div class="rgroup">
    <button class="big drop w36"><svg class="ic"><use href="#fillet"/></svg>圆角<svg class="ca"><use href="#caret"/></svg></button>
    <button class="big drop w44"><svg class="ic"><use href="#pattern"/></svg>线性阵<br>列<svg class="ca"><use href="#caret"/></svg></button>
    <div class="stack">
      <button><svg class="ic"><use href="#rib"/></svg>筋</button>
      <button><svg class="ic"><use href="#draft"/></svg>拔模</button>
      <button><svg class="ic"><use href="#shell"/></svg>抽壳</button>
    </div>
    <div class="stack second">
      <button><svg class="ic"><use href="#wrap"/></svg>包覆</button>
      <button><svg class="ic"><use href="#intersect"/></svg>相交</button>
      <button><svg class="ic"><use href="#mirror"/></svg>镜向</button>
    </div>
  </div>
  <div class="rgroup tight">
    <button class="big drop w48"><svg class="ic"><use href="#refgeo"/></svg>参考几<br>何体<svg class="ca"><use href="#caret"/></svg></button>
    <button class="big drop w36"><svg class="ic"><use href="#curve"/></svg>曲线<svg class="ca"><use href="#caret"/></svg></button>
  </div>
  <div class="rgroup last">
    <button class="big w60"><svg class="ic"><use href="#instant"/></svg>Instant3D</button>
  </div>
  <svg class="watermark" viewBox="0 0 76 72"><g fill="#d9deec"><path d="M25 4c16-3 29-1 29 6 0 9-10 16-25 22 9-8 15-14 15-19 0-5-7-6-19-6z"/><path d="M10 38c18-4 31-1 31 6 0 13-17 22-38 28l17-27 5-1-10 20c9-4 17-10 17-16 0-5-8-7-22-6z"/><path d="M74 30c-8-2-15-1-15 3 0 6 10 10 10 17 0 9-14 14-34 12l2-5c11 2 21 0 21-5 0-6-10-11-10-17 0-9 13-12 26-9z"/></g></svg>
</section>

<main class="workspace">
  <div class="center">
    <nav class="cmd-tabs">
      <button class="on t1">特征</button><button class="t2">草图</button><button class="t3">曲面</button><button class="t3">评估</button><button class="t4">DimXpert</button><button class="t5">办公室产品</button>
    </nav>
    <div class="split-area">
      <aside class="feature-panel">
        <div class="ptabs">
          <button class="on" aria-label="设计树"><svg class="ic"><use href="#part"/></svg></button>
          <button aria-label="属性"><svg class="ic"><use href="#props"/></svg></button>
          <button aria-label="配置"><svg class="ic"><use href="#config"/></svg></button>
          <button aria-label="尺寸专家"><svg class="ic"><use href="#target"/></svg></button>
          <button aria-label="外观"><svg class="ic"><use href="#appear"/></svg></button>
          <svg class="ic12 more"><use href="#dblR"/></svg>
        </div>
        <label class="filter"><svg class="ic"><use href="#funnel"/></svg><input type="text" aria-label="过滤"></label>
        <div class="tree-wrap">
          <ul class="tree">
            <li><svg class="ic"><use href="#sensor"/></svg>传感器</li>
            <li class="exp"><svg class="ic"><use href="#annot"/></svg>注解</li>
            <li><svg class="ic"><use href="#material"/></svg>延性铁</li>
            <li><svg class="ic"><use href="#plane"/></svg>前视基准面</li>
            <li><svg class="ic"><use href="#plane"/></svg>上视基准面</li>
            <li><svg class="ic"><use href="#plane"/></svg>右视基准面</li>
            <li><svg class="ic"><use href="#origin"/></svg>原点</li>
            <li class="exp"><svg class="ic"><use href="#extr"/></svg>凸台-拉伸1</li>
            <li class="exp"><svg class="ic"><use href="#extr"/></svg>凸台-拉伸2</li>
            <li><svg class="ic"><use href="#chamfer"/></svg>倒角1</li>
            <li><svg class="ic"><use href="#chamfer"/></svg>倒角2</li>
            <li><svg class="ic"><use href="#chamfer"/></svg>倒角3</li>
            <li><svg class="ic"><use href="#plane"/></svg>基准面2</li>
            <li class="exp"><svg class="ic"><use href="#scut"/></svg>切除-扫描1</li>
            <li class="exp"><svg class="ic"><use href="#extr"/></svg>凸台-拉伸3</li>
            <li><svg class="ic"><use href="#plane"/></svg>基准面3</li>
            <li><svg class="ic"><use href="#mirror"/></svg>镜向5</li>
            <li class="exp"><svg class="ic"><use href="#extr"/></svg>凸台-拉伸7</li>
            <li><svg class="ic"><use href="#mirror"/></svg>镜向6</li>
            <li class="exp"><svg class="ic"><use href="#extr"/></svg>凸台-拉伸8</li>
            <li><svg class="ic"><use href="#mirror"/></svg>镜向7</li>
            <li class="exp open"><svg class="ic"><use href="#extr"/></svg>凸台-拉伸9</li>
            <li class="child"><svg class="ic"><use href="#sketch"/></svg>(-) 草图8</li>
            <li class="sel"><svg class="ic"><use href="#mirrorsel"/></svg><span>镜向8</span></li>
          </ul>
          <div class="vscroll"><svg class="ic12"><use href="#chevU"/></svg><i class="thumb"></i><svg class="ic12"><use href="#chevD"/></svg></div>
        </div>
        <div class="hscroll"><i class="thumb"></i><svg class="ic12"><use href="#chevR"/></svg></div>
      </aside>

      <section class="viewport">
        <button class="handle" aria-label="折叠面板"><svg viewBox="0 0 10 28"><path d="M8 3v5L5 5.500zM8 11v5L5 13.500zM8 19v5L5 21.500z" fill="#4a4ea0"/></svg></button>
        <svg class="sword" viewBox="187 252 624 308" role="img" aria-label="剑模型">
          <g stroke="#0a0a0a" stroke-linejoin="round" stroke-width="1">
            <path d="m297 491-101 44-1 9 8 7 98-44z" fill="url(#grip)"/>
            <path d="M285 496c2 4 7 7 7 14M282 497c3 5 7 9 7 14M271 502c3 5 7 7 7 14M268 503c3 5 7 9 7 14M257 508c3 5 7 9 8 14M254 509c3 5 7 9 8 14M243 514c3 5 7 9 8 14M240 515c3 5 7 9 8 14M229 520c3 5 7 9 8 14M226 521c3 5 7 9 8 14M214 527c3 5 7 9 8 14M211 528c3 5 7 9 8 14M203 532c3 4 7 9 8 14" fill="none"/>
            <path d="m196 535 6 4 3 6-2 6-5-4-3-7z" fill="#191919"/>
            <path d="m292 459 52-13 8-52 59 2 283-128 95-5-310 140 9 18 279-125 32-13-65 68-283 128-35 45-47-27-44 29-20-7-18-36z" fill="#303030"/>
            <path d="m411 396 283-128 5 10-283 128z" fill="#474747"/>
            <path d="m694 268 95-5-32 12-58 3z" fill="#404040"/>
            <path d="m757 275 32-12-310 140 3 2 38-16z" fill="#171418"/>
            <path d="m352 394 59 2 5 10-51-2z" fill="#3f3f3f"/>
            <path d="m352 394 13 10-7 48-14-6z" fill="#474747"/>
            <path d="m446 466 283-129 5 14-282 128z" fill="#1b181c"/>
            <path d="m729 337 39-42 31-12-65 68z" fill="#3a2e3a"/>
            <path d="m370 479 46 25v20l-47-27z" fill="#252525"/>
            <path d="m416 504 30-38 6 13-36 45z" fill="#3d3040"/>
            <path d="m292 459 52-13 14 6-61 17z" fill="#424242"/>
            <path d="m292 459 5 10-6 11 28 34 6 12-20-7-18-36z" fill="#292929"/>
            <path d="m297 469 61-17 12 27-51 35-28-34z" fill="#303030"/>
            <path d="m319 514 51-35-1 18-44 29z" fill="#2a2027"/>
            <path d="m297 469 5 8-3 7-6-2m13 32 2-8c6 0 9 3 11 8" fill="none"/>
            <circle cx="320" cy="485" r="17.500" fill="#303030"/>
            <path d="M331 471c8 0 13-8 17-14M335 500c7-14 19-18 28-17M350 457l13 26M358 452l12 27M361 451l12 27" fill="none"/>
            <path d="M360 453l6-4 5-33 8 0-1 11 3 0 6-10h6l-3 11h4l8-11h8l-2 12h4l4-12 4 1 1 7 12-5 13-17 29-14 82-36 91-42 39-4" fill="none"/>
            <path d="M505 430l-38 15h-24l-10 5 5 5-1 3-6-5-5 3 6 7-2 3-15-4-3 5 10 5-2 4-13-3-3 5 10 4-2 5-32-16-8 2M498 432l79-35 95-43 25-26" fill="none"/>
            <path d="M360 453l37-17 1-3 9-2 11 4 4 9-2 11-5 4-6-2-36 16-3 6" fill="none"/>
            <path d="M477 388l41-4M557 352l46-6M498 432l30-28M580 395l32-29" fill="none" stroke-width="1.600"/>
            <path d="m369 458 6-3 6 9-6 3zM379 454l5-2 6 9-5 3zM387 450l5-2 6 9-5 2zM395 446l5-2 6 9-5 2zM403 443l5-2 6 8-5 3zM411 439l4-2 5 8-5 3z" fill="none" stroke-width="1.300"/>
          </g>
          <g stroke="#0000f0" fill="#0000f0"><path d="m416 446 15-8" stroke-width="1.500"/><path d="m427 435 9-1-8 6z"/><path d="M419 438l4 6M423 438l-5 7M417 441h8M421 437v8" stroke-width=".8"/></g>
        </svg>
        <svg class="triad" viewBox="205 595 56 52" role="img" aria-label="坐标轴"><circle cx="223" cy="638" r="5" fill="#2f9a3b"/><path d="m227 635 19-9" stroke="#b31217" stroke-width="3"/><path d="m243 622 12 0-9 7z" fill="#8d1014"/><path d="m227 635-9-20" stroke="#2a2ad0" stroke-width="3"/><path d="m214 607 8 9-7 3z" fill="#1717a0"/><path d="m223 640 4-5" stroke="#092c0d" stroke-width="4"/><text x="208" y="606" fill="#00f">Z</text><text x="252" y="623" fill="#e00">X</text><text x="218" y="644" fill="#087a10">Y</text></svg>
        <nav class="pane-tabs">
          <button aria-label="论坛"><svg class="ic"><use href="#chat"/></svg></button>
          <button class="on" aria-label="资源"><svg class="ic"><use href="#home"/></svg></button>
          <button aria-label="设计库"><svg class="ic"><use href="#books"/></svg></button>
          <button aria-label="文件探索器"><svg class="ic"><use href="#fold2"/></svg></button>
          <button aria-label="视图调色板"><svg class="ic"><use href="#palette"/></svg></button>
          <button aria-label="外观布景"><svg class="ic"><use href="#ball"/></svg></button>
          <button aria-label="自定义属性"><svg class="ic"><use href="#props"/></svg></button>
        </nav>
      </section>
    </div>
    <div class="model-tabs">
      <button aria-label="首个"><svg class="ic12"><use href="#triLE"/></svg></button><button aria-label="上一个"><svg class="ic12"><use href="#triL"/></svg></button><button aria-label="下一个"><svg class="ic12"><use href="#triR"/></svg></button><button aria-label="末个"><svg class="ic12"><use href="#triRE"/></svg></button>
      <button class="mt on">模型</button><button class="mt wide">运动算例 1</button>
    </div>
    <div class="headsup">
      <div class="hu-tools">
        <button aria-label="整屏显示全图"><svg class="ic"><use href="#zoomfit"/></svg></button>
        <button aria-label="局部放大"><svg class="ic"><use href="#zoomarea"/></svg></button>
        <button aria-label="上一视图"><svg class="ic"><use href="#prev"/></svg></button>
        <button aria-label="剖面视图"><svg class="ic"><use href="#section"/></svg></button>
        <button class="hsplit" aria-label="视图定向"><svg class="ic"><use href="#orient"/></svg><svg class="ca"><use href="#caret"/></svg></button>
        <button class="hsplit" aria-label="显示样式"><svg class="ic"><use href="#style"/></svg><svg class="ca"><use href="#caret"/></svg></button>
        <button class="hsplit" aria-label="隐藏显示项目"><svg class="ic"><use href="#glasses"/></svg><svg class="ca"><use href="#caret"/></svg></button>
        <button aria-label="编辑外观"><svg class="ic"><use href="#ball"/></svg></button>
        <button class="hsplit" aria-label="应用布景"><svg class="ic"><use href="#scene"/></svg><svg class="ca"><use href="#caret"/></svg></button>
        <button class="hsplit" aria-label="视图设定"><svg class="ic"><use href="#viewset"/></svg><svg class="ca"><use href="#caret"/></svg></button>
      </div>
      <div class="doc-controls">
        <button aria-label="左窗格"><svg class="ic"><use href="#paneL"/></svg></button>
        <button aria-label="右窗格"><svg class="ic"><use href="#paneR"/></svg></button>
        <button aria-label="最小化文档"><svg class="ic"><use href="#min"/></svg></button>
        <button aria-label="还原文档"><svg class="ic"><use href="#restore"/></svg></button>
        <button aria-label="关闭文档"><svg class="ic"><use href="#x"/></svg></button>
      </div>
    </div>
  </div>

  <aside class="taskpane">
    <header class="tp-head"><svg class="ic12"><use href="#dblL"/></svg><b>Solid...</b><svg class="ic"><use href="#pin"/></svg></header>
    <div class="tp-body">
      <div class="tp-list">
        <section class="card first">
          <h2>开始</h2>
          <a href="#"><svg class="ic"><use href="#new"/></svg>新建文档</a>
          <a href="#"><svg class="ic"><use href="#open"/></svg>打开文档</a>
          <a href="#"><svg class="ic"><use href="#cap"/></svg>制作我的第一零件</a>
          <a href="#"><svg class="ic"><use href="#cap"/></svg>制作我的第一工程图</a>
          <a href="#"><svg class="ic"><use href="#cap"/></svg>指导教程</a>
          <a href="#"><svg class="ic"><use href="#crate"/></svg>SolidWorks</a>
          <a href="#"><svg class="ic"><use href="#info"/></svg>一般信息</a>
        </section>
        <section class="card">
          <h2>SolidWorks</h2>
          <a href="#"><svg class="ic"><use href="#swprop"/></svg>属性标签</a>
          <a href="#"><svg class="ic"><use href="#swrx"/></svg>SolidWorks Rx</a>
          <a href="#"><svg class="ic"><use href="#swrx"/></svg>性能基准测试</a>
          <a href="#"><svg class="ic"><use href="#compare"/></svg>比较我的分数</a>
          <a href="#"><svg class="ic"><use href="#wizard"/></svg>复制设定向导</a>
        </section>
        <section class="card">
          <h2>社区</h2>
          <a href="#"><svg class="ic"><use href="#portal"/></svg>客户门户</a>
          <a href="#"><svg class="ic"><use href="#users"/></svg>用户组</a>
          <a href="#"><svg class="ic"><use href="#forum"/></svg>探讨论坛</a>
          <a href="#"><svg class="ic"><use href="#rss"/></svg>技术警戒</a>
          <a class="all" href="#">A...</a>
        </section>
      </div>
      <div class="tp-scroll"><svg class="ic16"><use href="#chevU"/></svg><i class="thumb"></i><svg class="ic12"><use href="#chevD"/></svg></div>
    </div>
    <div class="tp-nav"><svg class="ic16"><use href="#chevL"/></svg><svg class="ic16"><use href="#chevR"/></svg></div>
    <div class="tp-h"><svg class="ic12"><use href="#chevL"/></svg><i class="thumb"></i><svg class="ic12"><use href="#chevR"/></svg></div>
  </aside>

  <aside class="rightbar">
    <div class="dimtools">
      <i class="grip"></i>
      <button aria-label="智能尺寸"><svg class="ic"><use href="#smartdim"/></svg></button>
      <button aria-label="水平尺寸"><svg class="ic"><use href="#d1"/></svg></button>
      <button aria-label="竖直尺寸"><svg class="ic"><use href="#d2"/></svg></button>
      <button aria-label="基准尺寸"><svg class="ic"><use href="#d3"/></svg></button>
      <button aria-label="倾斜尺寸"><svg class="ic"><use href="#d4"/></svg></button>
      <button aria-label="水平尺寸链"><svg class="ic"><use href="#d5"/></svg></button>
      <button aria-label="竖直尺寸链"><svg class="ic"><use href="#d6"/></svg></button>
      <button aria-label="倒角尺寸"><svg class="ic"><use href="#d7"/></svg></button>
      <button aria-label="添加几何关系"><svg class="ic"><use href="#d8"/></svg></button>
      <button aria-label="显示几何关系"><svg class="ic"><use href="#d9"/></svg></button>
      <button aria-label="修复草图"><svg class="ic"><use href="#d10"/></svg></button>
      <i class="meter"></i>
    </div>
  </aside>
</main>

<footer class="status"><span>SolidWorks Premium 2014 x64 版</span><span class="editing">在编辑 零件</span><i class="st-ok"></i><i class="st-help"></i></footer>

<div class="ime">
  <svg class="ime-logo" viewBox="0 0 28 28"><rect x="2" y="2" width="24" height="24" rx="4" fill="url(#so)" transform="rotate(-8 14 14)"/><path d="M21 8c-5-2-12-2-13 1-1 5 12 3 12 8 0 4-8 4-13 2" fill="none" stroke="#fff" stroke-width="3.600"/></svg>
  <b>中</b>
  <svg class="ic" viewBox="0 0 16 16"><path d="M11 1c6 6 0 14-6 14-2 0-4-1-5-3 7 1 12-4 11-11z" fill="#1e74c8"/></svg>
  <svg class="ic" viewBox="0 0 16 16"><circle cx="4" cy="5" r="2" fill="none" stroke="#1e74c8" stroke-width="1.500"/><path d="M9 7h4v4l-3 4H8l2-4H9z" fill="#1e74c8"/></svg>
  <svg class="ic" viewBox="0 0 16 16"><rect x="0" y="2" width="16" height="12" rx="1" fill="#1e74c8"/><path d="M2 5h12M2 8h12" stroke="#fff" stroke-width="1.500" stroke-dasharray="2 1"/><path d="M4 11h8" stroke="#fff" stroke-width="1.500"/></svg>
  <svg class="ic" viewBox="0 0 16 16"><circle cx="7" cy="4" r="3.500" fill="#b4bdd2"/><path d="M1 15V9l4-1h5l2 2v5z" fill="#b4bdd2"/><path d="M10 9.500h4v5h-4z" fill="#fff" stroke="#b4bdd2"/></svg>
  <svg class="ic" viewBox="0 0 16 16"><path d="M5 1c1 2 5 2 6 0l5 3-2 4-2-1v8H4V7L2 8 0 4z" fill="#1e74c8"/></svg>
  <svg class="ic" viewBox="0 0 16 16"><path d="m2 14 7-7" stroke="#1e74c8" stroke-width="4"/><path d="M13 1 9 5l2 3 4-3c2 3-2 7-6 5-3-2-3-8 4-9z" fill="#1e74c8"/></svg>
</div>
</body>
</html>
```
FILE: styles.css
```
* { box-sizing: border-box; }
body {
  margin: 0;
  height: 100vh;
  overflow: hidden;
  display: flex;
  flex-direction: column;
  position: relative;
  background: #c4c8d4;
  color: #2b2b50;
  font: 12px/13px "Noto Sans", "Noto Sans CJK SC", sans-serif;
}
button {
  border: 0;
  padding: 0;
  background: none;
  color: inherit;
  font: inherit;
  display: flex;
  align-items: center;
  justify-content: center;
  white-space: nowrap;
}
input { font: inherit; border: 0; background: none; outline: none; min-width: 0; }
svg { flex: none; display: block; }
.defs { position: absolute; width: 0; height: 0; }
.ic { width: 16px; height: 16px; }
.ic12 { width: 12px; height: 12px; }
.ic16 { width: 16px; height: 16px; }
.ic18 { width: 18px; height: 18px; }
.ca { width: 5px; height: 3px; }
.thumb { background: #cdcdcd; display: block; }

/* title bar */
.titlebar {
  height: 27px;
  flex: none;
  display: flex;
  align-items: stretch;
  background: linear-gradient(#ebedf9, #b9bdd3);
  border-bottom: 1px solid #474b63;
}
.brand {
  width: 124px;
  flex: none;
  display: flex;
  align-items: center;
  gap: 2px;
  background: linear-gradient(#ffffff, #e3e5ee);
  border-right: 9px solid #6d6e98;
}
.brand-mark { width: 17px; height: 22px; }
.brand-name { color: #d8281f; font: italic 14px/16px "Open Sans", "Noto Sans", sans-serif; }
.menu {
  flex: none;
  width: 408px;
  display: flex;
  align-items: center;
  gap: 16px;
  padding-left: 9px;
  background: linear-gradient(#d9dbe9, #b3b6cc);
  border-right: 1px solid #53566c;
}
.menu .pin { margin-left: -3px; }
.quick { flex: none; display: flex; align-items: center; padding-left: 6px; width: 300px; }
.split { width: 36px; gap: 8px; justify-content: flex-start; }
.single { width: 23px; justify-content: flex-start; }
.doc-title { flex: 1; text-align: center; align-self: center; min-width: 60px; color: #222; }
.search {
  flex: none;
  width: 202px;
  height: 22px;
  margin-top: 2px;
  padding: 0 4px 0 5px;
  display: flex;
  align-items: center;
  gap: 4px;
  border: 1px solid #44475a;
  border-radius: 5px;
  background: linear-gradient(#dfe2ef, #ffffff);
}
.search input { flex: 1; padding: 0; color: #555; }
.search input::placeholder { color: #666; opacity: 1; }
.window-controls { flex: none; display: flex; align-items: center; gap: 7px; padding: 0 4px 2px 7px; }
.window-controls .split { width: 29px; }

/* view orientation bar */
.viewbar {
  height: 31px;
  flex: none;
  display: flex;
  background: linear-gradient(#eef0fd, #dde1f1);
  border-bottom: 1px solid #9a9ba4;
}
.view-tools {
  display: flex;
  align-items: center;
  gap: 7px;
  width: 280px;
  padding-left: 6px;
  background: linear-gradient(#e9ebf6, #b9bcd2);
  border-right: 2px solid #a3a5b3;
}
.bar { width: 1px; height: 19px; margin: 0 -1px; background: #74778a; }
.view-tools .bar + button { margin-left: 1px; }

/* ribbon */
.ribbon {
  height: 74px;
  flex: none;
  display: flex;
  position: relative;
  background: linear-gradient(#fdfdff, #f0f1f7 55%, #d2d4e4);
  border-bottom: 2px solid #5c5f76;
}
.rgroup { display: flex; padding: 4px 10px 0 0; border-right: 1px solid #c6c8d6; margin-bottom: 6px; }
.rgroup.last { border-right: 0; }
.rgroup.tight { padding-right: 0; }
.big { flex-direction: column; justify-content: flex-start; padding-top: 10px; text-align: center; }
.big .ic { margin-bottom: 1px; }
.drop { padding-top: 3px; position: relative; }
.drop .ca { position: absolute; bottom: 1px; left: 50%; margin-left: -2px; }
.w36 { width: 36px; }
.w44 { width: 44px; }
.w48 { width: 48px; }
.w50 { width: 50px; }
.w60 { width: 60px; font-size: 11px; }
.stack { display: flex; flex-direction: column; gap: 7px; padding: 2px 0 0 3px; }
.stack button { justify-content: flex-start; gap: 6px; height: 16px; }
.stack.second { padding-left: 12px; }
.watermark { position: absolute; right: 7px; top: 0; width: 76px; height: 72px; }

/* workspace */
.workspace { flex: 1; min-height: 0; display: flex; }
.center { flex: 1; min-width: 0; display: flex; flex-direction: column; position: relative; border-right: 2px solid #5f6378; }
.cmd-tabs { display: flex; height: 20px; flex: none; color: #494b5c; }
.cmd-tabs button {
  background: #b7bbcd;
  border: 2px solid #5f6278;
  border-width: 1px 2px 2px 0;
}
.cmd-tabs .on { background: linear-gradient(#e3e5f0, #eef0f8); border-bottom: 0; border-top: 0; color: #222; padding-right: 8px; }
.t1 { width: 46px; }
.t2 { width: 57px; }
.t3 { width: 56px; }
.t4 { width: 67px; }
.t5 { width: 74px; }
.split-area { flex: 1; min-height: 0; display: flex; }

.feature-panel {
  width: 187px;
  flex: none;
  display: flex;
  flex-direction: column;
  padding-top: 2px;
  background: #e1e4ed;
  border-right: 3px solid #6b6e82;
  border-top: 1px solid #7e8296;
}
.ptabs {
  display: flex;
  flex: none;
  align-items: flex-end;
  height: 28px;
  gap: 1px;
  background: #d2d6e8;
  border-top: 1px solid #7e8296;
  border-bottom: 1px solid #5f6580;
}
.ptabs button {
  width: 27px;
  height: 21px;
  border: 1px solid #6e7389;
  border-bottom: 0;
  border-radius: 4px 4px 0 0;
  background: #c0c5da;
}
.ptabs .on { width: 17px; border-left: 0; background: #e6e8f2; justify-content: flex-end; padding-right: 5px; }
.ptabs .more { margin: 0 4px 4px auto; }
.filter {
  display: flex;
  flex: none;
  height: 17px;
  align-items: center;
  margin: 1px 1px 3px 0;
  border: 1px solid #8b8f9d;
  border-left: 0;
  border-radius: 0 9px 9px 0;
  background: linear-gradient(#d6daed, #ffffff);
}
.filter .ic { margin-left: -4px; }
.filter input { flex: 1; }
.tree-wrap { flex: 1; min-height: 0; display: flex; }
.tree { flex: 1; margin: 0; padding: 0; list-style: none; overflow: hidden; color: #000; }
.tree li { display: flex; align-items: center; gap: 5px; height: 20px; padding-left: 11px; position: relative; white-space: nowrap; }
.tree li::before { content: ""; position: absolute; left: 0; top: 9px; width: 10px; border-top: 1px dotted #777; }
.tree li::after { content: ""; position: absolute; left: 0; top: 0; height: 20px; border-left: 1px dotted #777; }
.tree .exp::after {
  top: 5px;
  height: 9px;
  width: 5px;
  border: 1px solid #999;
  border-left: 0;
  background:
    linear-gradient(#2b51a8, #2b51a8) 0 50% / 3px 1px no-repeat,
    linear-gradient(#2b51a8, #2b51a8) 0 50% / 1px 5px no-repeat,
    #fff;
}
.tree .open::after { background: linear-gradient(#2b51a8, #2b51a8) 0 50% / 3px 1px no-repeat, #fff; }
.tree .child { padding-left: 30px; }
.tree .child::before { left: 19px; }
.tree .child::after { left: 19px; height: 10px; }
.tree .sel span { background: #3092f5; color: #fff; line-height: 18px; }
.vscroll { width: 14px; display: flex; flex-direction: column; align-items: center; background: #f0f0f0; padding: 3px 0; gap: 3px; }
.vscroll .thumb { width: 14px; flex: 1; margin: 17px 0 16px; }
.hscroll { flex: none; height: 16px; margin-bottom: 3px; display: flex; align-items: center; justify-content: space-between; background: #f0f0f0; padding: 0 18px 0 6px; }
.hscroll .thumb { width: 130px; height: 15px; }

.viewport { flex: 1; min-width: 0; position: relative; background: #c4c8d4; }
.handle {
  position: absolute;
  left: -4px;
  top: 246px;
  width: 11px;
  height: 29px;
  background: #e3e5f1;
  border: 2px solid #7f83a0;
  border-left: 0;
  border-radius: 0 4px 4px 0;
}
.handle svg { width: 10px; height: 28px; }
.sword { position: absolute; left: 0; top: 100px; width: 624px; height: 308px; }
.triad { position: absolute; left: 18px; top: 443px; width: 56px; height: 52px; font: 10px "Liberation Serif", serif; }
.pane-tabs { position: absolute; right: 0; top: 40px; width: 24px; display: flex; flex-direction: column; }
.pane-tabs button { height: 24px; border: 2px solid #7a7e96; border-width: 1px 0 2px 2px; border-radius: 5px 0 0 5px; background: linear-gradient(#c9ccdb, #b2b6ca); }
.pane-tabs .on { background: #f3f4f9; margin-right: -2px; padding-right: 2px; }

.headsup { position: absolute; left: 187px; right: 0; top: 4px; height: 20px; display: flex; align-items: center; padding: 0 9px 0 389px; justify-content: space-between; }
.hu-tools { display: flex; gap: 7px; }
.hsplit { gap: 4px; }
.hsplit + .hsplit { margin-left: 1px; }
.doc-controls { display: flex; gap: 7px; }

.model-tabs { height: 16px; flex: none; display: flex; background: #e1e4ed; border-top: 1px solid #000; }
.model-tabs button { width: 16px; height: 15px; background: #bfc3d3; border: 1px solid #8d91a6; border-width: 0 1px 1px 0; }
.model-tabs button:first-child { width: 7px; justify-content: flex-end; overflow: hidden; }
.model-tabs .mt { width: 46px; margin-left: 3px; color: #000; border: 1px solid #333; border-width: 0 1px 1px 1px; background: #b9bdce; }
.model-tabs .on { background: #dcdeea; }
.model-tabs .wide { width: 78px; margin-left: 0; }

/* task pane */
.taskpane { width: 82px; flex: none; display: flex; flex-direction: column; background: #e1e4ed; }
.tp-head { height: 20px; flex: none; display: flex; align-items: center; padding: 0 4px 0 8px; background: linear-gradient(#e7e9f6, #cdd1e4); color: #2c2c60; }
.tp-head b { font-size: 13px; flex: 1; }
.tp-body { flex: 1; min-height: 0; display: flex; }
.tp-list { width: 64px; overflow: hidden; padding: 6px 0 0 12px; }
.card { width: 108px; border: 1px solid #9599b5; border-radius: 4px; background: linear-gradient(100deg, #ccd2e2, #e9ebf6); margin-bottom: 21px; }
.card h2 { margin: 0; height: 21px; padding-left: 5px; font-size: 12px; line-height: 21px; color: #45485f; background: linear-gradient(#eceef3, #b9beca); border-radius: 4px 4px 0 0; }
.card a { display: flex; align-items: center; gap: 4px; height: 22px; padding-left: 3px; color: #111122; text-decoration: none; white-space: nowrap; font-family: "Liberation Sans", "Noto Sans CJK SC", sans-serif; }
.card.first a { height: 23px; }
.card .all { padding: 26px 0 26px 30px; color: #3a5f9c; height: 70px; }
.tp-scroll { width: 18px; background: #f0f0f0; display: flex; flex-direction: column; align-items: center; padding-top: 13px; }
.tp-scroll .thumb { width: 16px; height: 156px; margin: 5px 0 310px; }
.tp-nav { height: 17px; flex: none; display: flex; align-items: center; gap: 7px; padding-left: 13px; background: #f0f0f0; }
.tp-h { height: 17px; flex: none; display: flex; align-items: center; gap: 3px; justify-content: space-between; padding: 0 3px; background: #f0f0f0; border-top: 1px solid #fff; }
.tp-h .thumb { width: 37px; height: 15px; margin-right: 8px; }

.rightbar { width: 28px; flex: none; background: linear-gradient(#d5d7e8, #c0c8dc 60%, #b9bfd3); }
.dimtools { position: relative; width: 28px; height: 274px; display: flex; flex-direction: column; align-items: center; gap: 7px; padding-top: 7px; background: linear-gradient(90deg, #f0f1fc, #b9bdd4); border-bottom: 2px solid #8f93a5; }
.grip { width: 20px; height: 2px; margin-bottom: 2px; border-top: 2px dotted #888da0; }
.meter { position: absolute; right: 0; top: 4px; width: 9px; height: 58px; border-radius: 5px; background: linear-gradient(#f0b060, #68d870) 4px 28px / 2px 26px no-repeat #74777f; }

.status { height: 6px; flex: none; overflow: hidden; display: flex; background: #d3d7e6; border-top: 2px solid #6a6d80; color: #000; padding-right: 8px; line-height: 18px; }
.status span:first-child { margin-left: -6px; flex: 1; }
.editing { width: 168px; }
.st-ok { width: 13px; height: 6px; border: 2px solid #36599c; background: #4fc840; margin-right: 56px; }
.st-help { width: 10px; height: 8px; border-radius: 5px 5px 0 0; background: #d7a31e; }

/* floating input-method bar */
.ime {
  position: absolute;
  right: 19px;
  bottom: 59px;
  width: 185px;
  height: 24px;
  display: flex;
  align-items: center;
  justify-content: space-between;
  padding: 0 4px 0 0;
  background: linear-gradient(#fff, #fff) 12px 0 no-repeat;
  border: 1px solid #bccbd9;
  border-left: 0;
}
.ime-logo { width: 28px; height: 28px; }
.ime b { color: #1e74c8; font-size: 15px; line-height: 20px; }
```
